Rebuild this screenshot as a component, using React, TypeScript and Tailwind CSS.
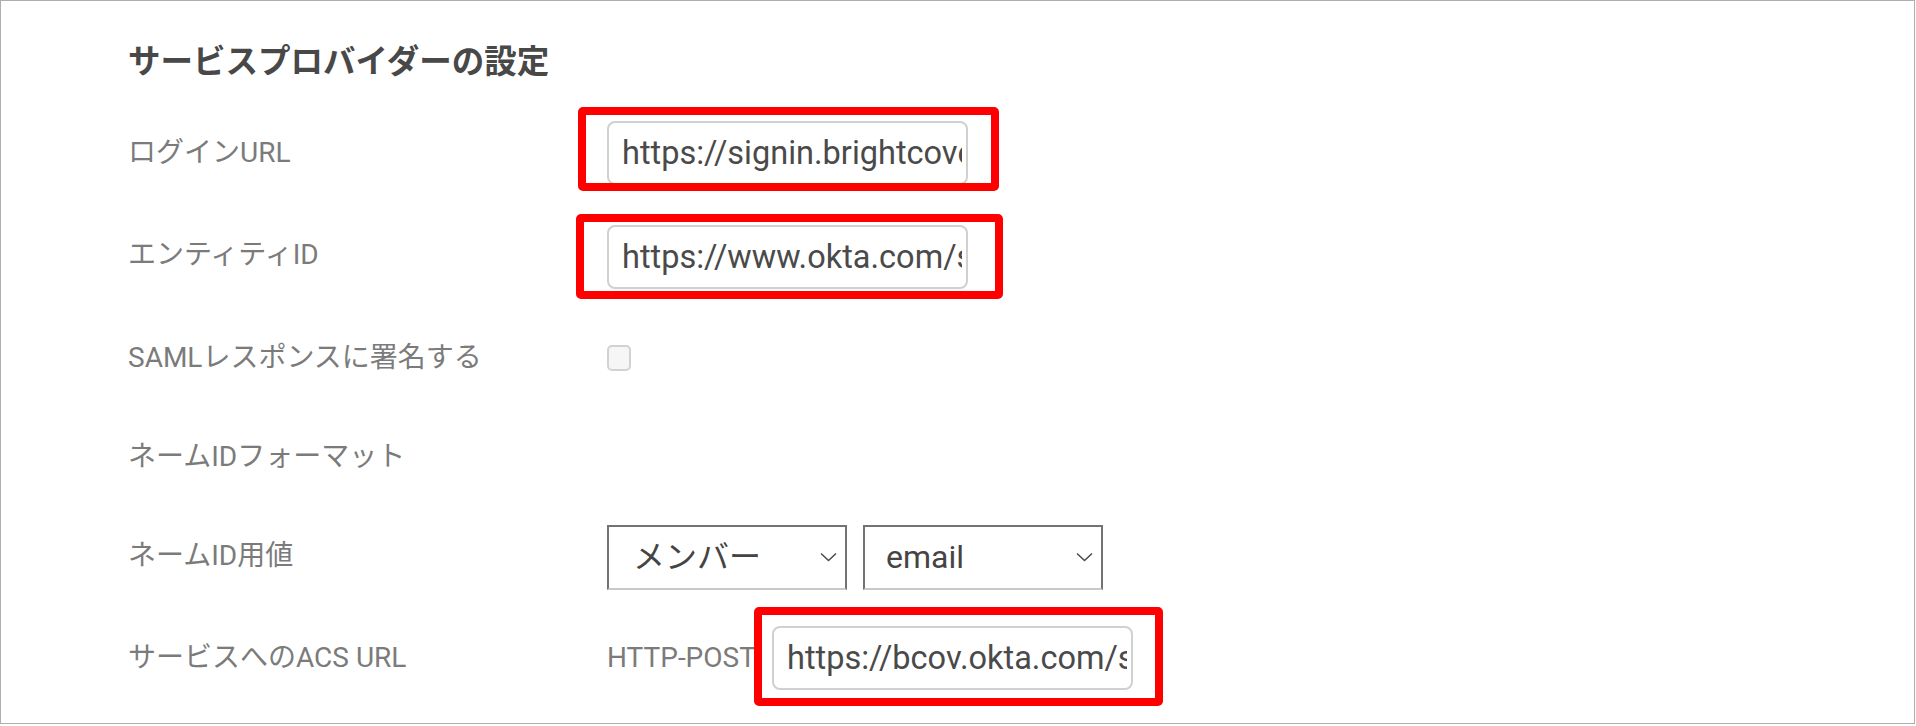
import React from "react";

type RowProps = {
  label: string;
  h: string;
  children?: React.ReactNode;
};

function Row({ label, h, children }: RowProps) {
  return (
    <div className={`flex items-center ${h}`}>
      <div className="w-[479px] shrink-0 text-[28px] leading-[36px] text-[#7b7b7b]">
        {label}
      </div>
      <div className="flex items-center">{children}</div>
    </div>
  );
}

function Highlight({ className }: { className: string }) {
  return (
    <div
      className={`absolute border-[8px] border-[#ff0000] rounded-[5px] pointer-events-none ${className}`}
    />
  );
}

function UrlInput({ value }: { value: string }) {
  return (
    <input
      readOnly
      value={value}
      className="w-[361px] h-[64px] border-2 border-[#d0d0d0] rounded-[8px] bg-white pl-[13px] pr-[4px] text-[32.5px] text-[#4a4a4a] outline-none"
      style={{ fontFamily: "Roboto, 'Noto Sans CJK JP', sans-serif" }}
    />
  );
}

function Chevron() {
  return (
    <svg width="17" height="10" viewBox="0 0 17 10" fill="none">
      <path d="M1 1.5L8.5 8.5L16 1.5" stroke="#4a4a4a" strokeWidth="1.5" />
    </svg>
  );
}

function FakeSelect({ text, pad }: { text: string; pad: string }) {
  return (
    <div
      className={`flex items-center justify-between w-[240px] h-[65px] border-2 border-[#737373] border-b-[#c9c9c9] bg-white ${pad} pr-[8px]`}
    >
      <span className="text-[32px] leading-none text-[#444]">{text}</span>
      <Chevron />
    </div>
  );
}

export default function App() {
  return (
    <div
      className="w-[1915px] h-[724px] border border-[#aeaeae] bg-white pl-[127px] pt-[41px]"
      style={{ fontFamily: "Roboto, 'Noto Sans CJK JP', sans-serif" }}
    >
      <h2 className="text-[32.5px] leading-[40px] font-bold text-[#484848]">
        サービスプロバイダーの設定
      </h2>
      <div className="mt-[20px]">
        <Row label="ログインURL" h="h-[101px]">
          <div className="relative">
            <UrlInput value="https://signin.brightcove.com/sso/saml" />
            <Highlight className="-left-[29px] -right-[31px] -top-[14px] -bottom-[6px]" />
          </div>
        </Row>
        <Row label="エンティティID" h="h-[103px]">
          <div className="relative mt-[4px]">
            <UrlInput value="https://www.okta.com/saml2/service-provider" />
            <Highlight className="-left-[31px] -right-[35px] -top-[11px] -bottom-[10px]" />
          </div>
        </Row>
        <Row label="SAMLレスポンスに署名する" h="h-[103px]">
          <div className="w-[24px] h-[26px] border-2 border-[#d2d2d2] rounded-[5px] bg-[#f6f6f6]" />
        </Row>
        <Row label="ネームIDフォーマット" h="h-[96px]" />
        <Row label="ネームID用値" h="h-[101px]">
          <div className="flex gap-[16px] mt-[3px]">
            <FakeSelect text="メンバー" pad="pl-[24px]" />
            <FakeSelect text="email" pad="pl-[21px]" />
          </div>
        </Row>
        <Row label="サービスへのACS URL" h="h-[104px]">
          <div className="flex items-center">
            <span className="text-[28px] leading-[36px] text-[#7b7b7b] whitespace-nowrap w-[165px] overflow-hidden">
              HTTP-POST
            </span>
            <div className="relative">
              <UrlInput value="https://bcov.okta.com/sso/saml2/0oa1" />
              <Highlight className="-left-[18px] -right-[30px] -top-[19px] -bottom-[16px]" />
            </div>
          </div>
        </Row>
      </div>
    </div>
  );
}
